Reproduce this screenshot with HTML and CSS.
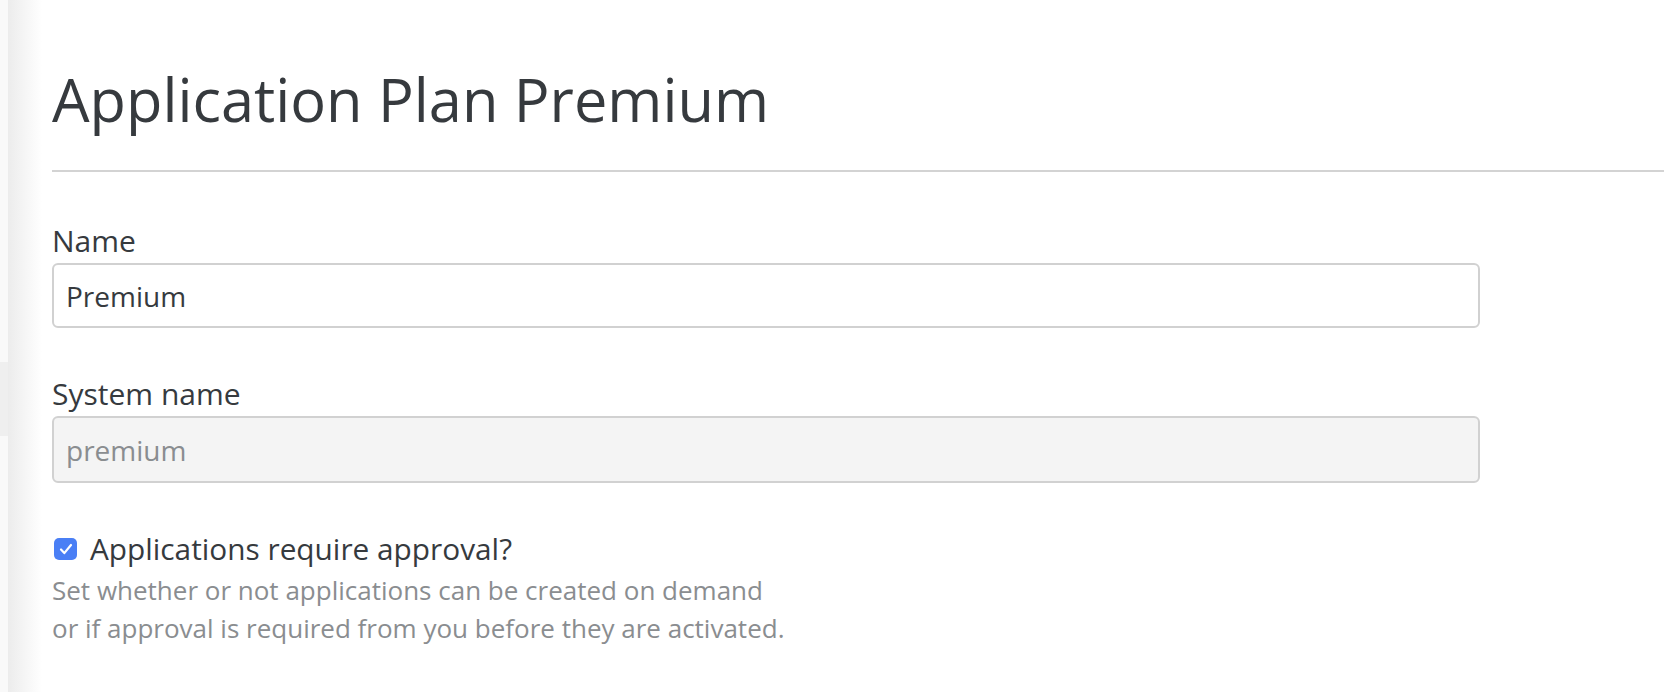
FILE: index.html
```html
<!DOCTYPE html>
<html lang="en">
<head>
<meta charset="utf-8">
<title>Application Plan Premium</title>
<link rel="stylesheet" href="styles.css">
</head>
<body>
<div class="layout">
  <aside class="sidebar">
    <div class="sidebar-active"></div>
  </aside>
  <main class="main">
    <header class="page-header">
      <h1 class="page-title">Application Plan Premium</h1>
    </header>
    <form class="plan-form">
      <div class="form-group">
        <label class="form-label" for="plan-name">Name</label>
        <input class="form-input" id="plan-name" type="text" value="Premium">
      </div>
      <div class="form-group">
        <label class="form-label" for="plan-system-name">System name</label>
        <input class="form-input form-input-readonly" id="plan-system-name" type="text" value="premium" readonly>
      </div>
      <div class="form-check">
        <label class="check-label">
          <span class="check-box" aria-hidden="true">
            <svg viewBox="0 0 22 22" width="22" height="22"><path d="M6 11.5l3.3 3.6L16 7" fill="none" stroke="#fff" stroke-width="2.2" stroke-linecap="round" stroke-linejoin="round"/></svg>
          </span>
          <span class="check-text">Applications require approval?</span>
        </label>
        <p class="help-text">Set whether or not applications can be created on demand<br>or if approval is required from you before they are activated.</p>
      </div>
    </form>
  </main>
</div>
</body>
</html>
```

FILE: styles.css
```css
* {
  box-sizing: border-box;
}

html, body {
  margin: 0;
  padding: 0;
  height: 100%;
}

body {
  font-family: "Open Sans", "Noto Sans", "Liberation Sans", sans-serif;
  color: #363a3e;
  background: #ffffff;
  overflow: hidden;
}

.layout {
  display: flex;
  height: 100vh;
}

.sidebar {
  width: 8px;
  flex: 0 0 8px;
  background: #f9f9f9;
}

.sidebar-active {
  margin-top: 362px;
  height: 74px;
  background: #efefef;
}

.main {
  flex: 1;
  padding-left: 44px;
  background-color: #ffffff;
  background-image: linear-gradient(to right, #ececec 0, rgba(255, 255, 255, 0) 34px);
  background-repeat: no-repeat;
  background-size: 34px 100%;
}

.page-header {
  padding-top: 63px;
  padding-bottom: 35px;
  border-bottom: 2px solid #d3d3d3;
}

.page-title {
  margin: 0;
  font-size: 59.5px;
  line-height: 72px;
  font-weight: 400;
  color: #363a3e;
}

.plan-form {
  width: 1428px;
  padding-top: 49px;
}

.form-group {
  display: flex;
  flex-direction: column;
  margin-bottom: 46px;
}

.form-label {
  font-size: 30px;
  line-height: 40px;
  margin-bottom: 2px;
  color: #363a3e;
}

.form-input {
  height: 65px;
  border: 2px solid #d1d1d1;
  border-radius: 6px;
  padding: 0 12px;
  font-family: inherit;
  font-size: 28px;
  color: #363a3e;
  background: #ffffff;
  outline: none;
}

.form-input-readonly {
  height: 67px;
  background: #f4f4f4;
  color: #8a8d90;
}

.check-label {
  display: flex;
  align-items: center;
  gap: 13px;
  font-size: 29.8px;
  line-height: 40px;
  color: #363a3e;
}

.check-box {
  width: 23px;
  height: 22px;
  margin-left: 2px;
  border-radius: 5px;
  background: #4a7ff5;
  display: flex;
  align-items: center;
  justify-content: center;
}

.check-box svg {
  display: block;
}

.help-text {
  margin: 2px 0 0;
  font-size: 26px;
  line-height: 38px;
  color: #8a8d90;
}
```
